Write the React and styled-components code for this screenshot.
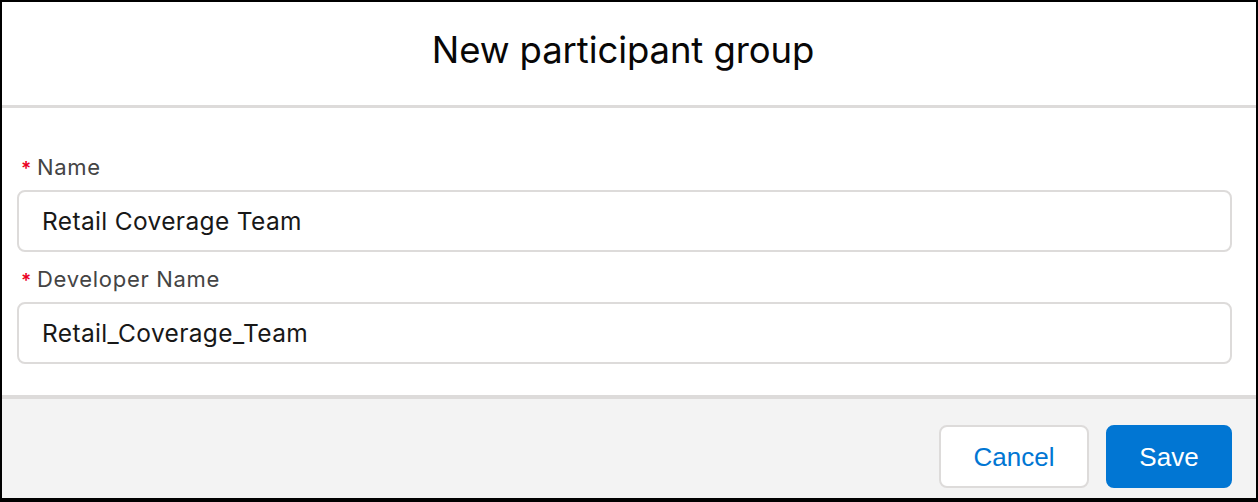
import React from 'react';
import styled, { createGlobalStyle } from 'styled-components';

const GlobalStyle = createGlobalStyle`
  html, body {
    margin: 0;
    padding: 0;
    background: #ffffff;
  }
  * {
    box-sizing: border-box;
  }
`;

/** outer modal frame **/
const Modal = styled.div`
  width: 1258px;
  height: 502px;
  border: 2px solid #000;
  border-bottom-width: 4px;
  display: flex;
  flex-direction: column;
  background: #fff;
  font-family: Inter, 'Noto Sans', sans-serif;
`;

const Header = styled.div`
  height: 106px;
  border-bottom: 3px solid #dddbda;
  display: flex;
  align-items: center;
  justify-content: center;
  padding: 0 12px 8px 0;
`;

const Title = styled.h1`
  margin: 0;
  font-size: 36.5px;
  font-weight: 400;
  color: #080707;
  letter-spacing: -0.1px;
`;

const Body = styled.div`
  flex: 1;
  padding: 47px 24px 0 15px;
  display: flex;
  flex-direction: column;
`;

const Field = styled.div`
  display: flex;
  flex-direction: column;
  margin-bottom: ${props => (props.last ? '0' : '15px')};
`;

const Label = styled.label`
  display: flex;
  align-items: baseline;
  padding-left: 4px;
  height: 24px;
  line-height: 24px;
  font-size: 22px;
  letter-spacing: 0.7px;
  color: #444444;
  margin-bottom: 11px;
`;

const Required = styled.abbr`
  color: #ea001e;
  text-decoration: none;
  font-size: 19px;
  font-weight: 600;
  margin-right: 5px;
`;

const Input = styled.div`
  height: 62px;
  border: 2px solid #dddbda;
  border-radius: 8px;
  display: flex;
  align-items: center;
  padding: 0 0 0 23px;
  font-size: 24.5px;
  color: #181818;
  letter-spacing: 0.35px;
`;

const Footer = styled.div`
  height: 103px;
  border-top: 4px solid #dddbda;
  background: #f3f3f3;
  display: flex;
  justify-content: flex-end;
  align-items: flex-start;
  gap: 17px;
  padding: 26px 24px 0 0;
`;

const Button = styled.button`
  height: 63px;
  width: ${props => props.width}px;
  border-radius: 8px;
  border: 2px solid ${props => (props.brand ? '#0176d3' : '#dddbda')};
  background: ${props => (props.brand ? '#0176d3' : '#ffffff')};
  color: ${props => (props.brand ? '#ffffff' : '#0176d3')};
  font-family: 'Liberation Sans', Arial, sans-serif;
  font-size: 26px;
  padding: 2px 0 0;
  cursor: pointer;
`;

export default function App() {
  return (
    <>
      <GlobalStyle />
      <Modal>
        <Header>
          <Title>New participant group</Title>
        </Header>
        <Body>
          <Field>
            <Label>
              <Required title="required">*</Required>Name
            </Label>
            <Input>Retail Coverage Team</Input>
          </Field>
          <Field last>
            <Label>
              <Required title="required">*</Required>Developer Name
            </Label>
            <Input>Retail_Coverage_Team</Input>
          </Field>
        </Body>
        <Footer>
          <Button width={150}>Cancel</Button>
          <Button brand width={126}>Save</Button>
        </Footer>
      </Modal>
    </>
  );
}
